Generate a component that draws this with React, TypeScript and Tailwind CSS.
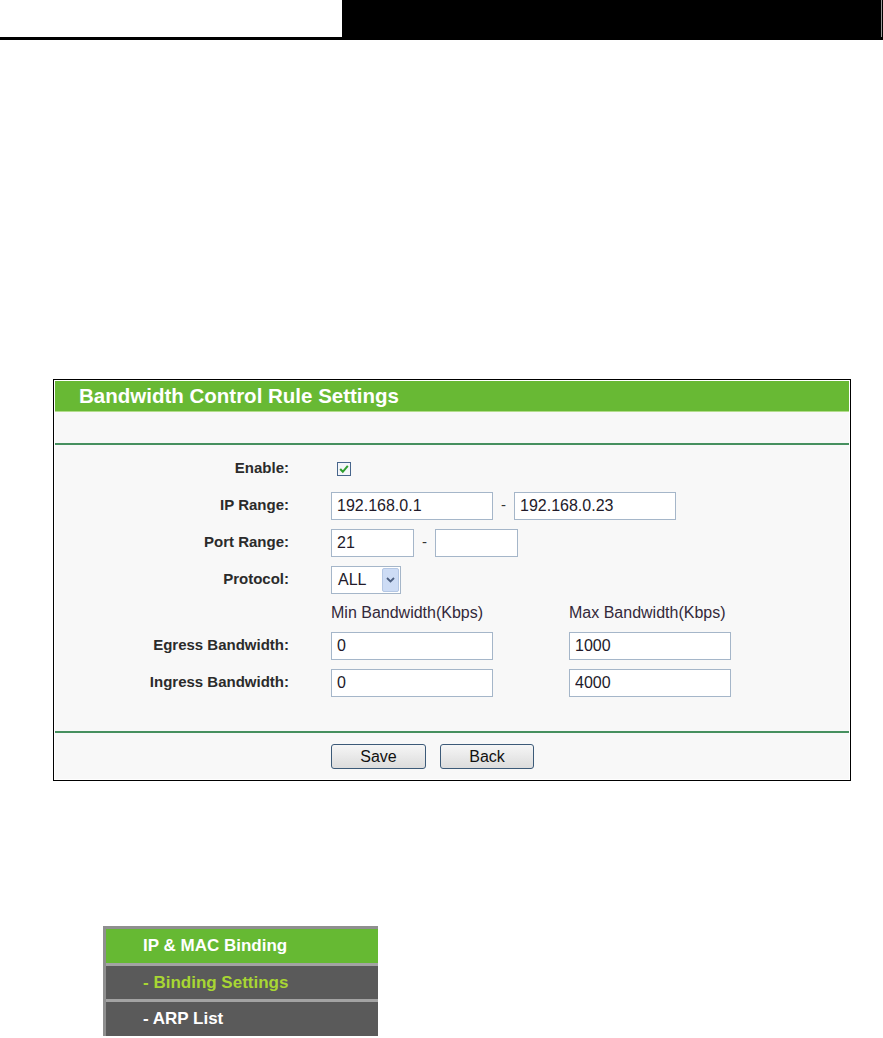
import React from "react";

const inputCls =
  "h-[28px] border border-[#a5b6c9] bg-white px-[5px] text-[16px] text-[#221a2a] outline-none";

function Row({
  label,
  children,
  height = "h-[37px]",
}: {
  label?: string;
  children: React.ReactNode;
  height?: string;
}) {
  return (
    <div className={`flex items-center ${height}`}>
      <div className="w-[234px] text-right text-[15px] font-bold text-[#2b2b2b]">
        {label}
      </div>
      <div className="ml-[42px] flex items-center">{children}</div>
    </div>
  );
}

function Dash() {
  return <span className="w-[21px] text-center text-[15px] text-[#333]">-</span>;
}

function CheckBox() {
  return (
    <svg width="14" height="14" viewBox="0 0 14 14" className="ml-[6px]">
      <rect x="0.5" y="0.5" width="13" height="13" fill="#f4f6f9" stroke="#48668c" />
      <path d="M3.2 7 L5.8 9.8 L10.8 3.8" fill="none" stroke="#2f9e2f" strokeWidth="2" />
    </svg>
  );
}

function Select() {
  return (
    <div className="flex h-[28px] w-[70px] items-center justify-between border border-[#a5b6c9] bg-white pl-[6px] pr-[1px]">
      <span className="text-[16px] text-[#221a2a]">ALL</span>
      <div className="flex h-[24px] w-[17px] items-center justify-center rounded-[2px] border border-[#b4c7e4] bg-[#cddcf5]">
        <svg width="9" height="6" viewBox="0 0 9 6">
          <path d="M1 1 L4.5 4.5 L8 1" fill="none" stroke="#4c5f80" strokeWidth="1.8" />
        </svg>
      </div>
    </div>
  );
}

function Button({ children, width }: { children: React.ReactNode; width: string }) {
  return (
    <button
      className={`h-[25px] ${width} rounded-[3px] border border-[#3c5a78] bg-gradient-to-b from-[#f6f6f6] to-[#dcdcdc] text-[16px] text-[#111]`}
    >
      {children}
    </button>
  );
}

export default function App() {
  return (
    <div className="min-h-screen bg-white font-['Liberation_Sans',Arial,sans-serif]">
      {/* top bar */}
      <div className="flex h-[37px]">
        <div className="w-[342px] bg-white" />
        <div className="flex flex-1 justify-end bg-black pr-[1px]">
          <div className="w-px bg-[#9a9a9a]" />
        </div>
      </div>
      <div className="h-[3px] bg-black" />

      {/* settings panel */}
      <div className="ml-[53px] mt-[339px] w-[798px] border border-black bg-white p-px">
        <div className="flex h-[30px] items-center bg-[#68b934] pl-[24px] text-[20.5px] font-bold text-white">
          Bandwidth Control Rule Settings
        </div>
        <div className="h-px bg-[#b2dc8c]" />
        <div className="h-[31px] bg-[#f8f8f8]" />
        <div className="h-[2px] bg-[#46905f]" />

        <div className="bg-[#f8f8f8] pb-[30px] pt-[5px]">
          <Row label="Enable:">
            <CheckBox />
          </Row>
          <Row label="IP Range:">
            <input readOnly defaultValue="192.168.0.1" className={`${inputCls} w-[162px]`} />
            <Dash />
            <input readOnly defaultValue="192.168.0.23" className={`${inputCls} w-[162px]`} />
          </Row>
          <Row label="Port Range:">
            <input readOnly defaultValue="21" className={`${inputCls} w-[83px]`} />
            <Dash />
            <input readOnly defaultValue="" className={`${inputCls} w-[83px]`} />
          </Row>
          <Row label="Protocol:">
            <Select />
          </Row>
          <Row height="h-[29px]">
            <div className="flex h-full items-start pt-px text-[16px] text-[#33293a]">
              <span className="w-[238px]">Min Bandwidth(Kbps)</span>
              <span>Max Bandwidth(Kbps)</span>
            </div>
          </Row>
          <Row label="Egress Bandwidth:">
            <input readOnly defaultValue="0" className={`${inputCls} w-[162px]`} />
            <span className="w-[76px]" />
            <input readOnly defaultValue="1000" className={`${inputCls} w-[162px]`} />
          </Row>
          <Row label="Ingress Bandwidth:">
            <input readOnly defaultValue="0" className={`${inputCls} w-[162px]`} />
            <span className="w-[76px]" />
            <input readOnly defaultValue="4000" className={`${inputCls} w-[162px]`} />
          </Row>
        </div>
        <div className="h-[2px] bg-[#46905f]" />
        <div className="flex gap-[14px] bg-[#f8f8f8] pb-[10px] pl-[276px] pt-[11px]">
          <Button width="w-[95px]">Save</Button>
          <Button width="w-[94px]">Back</Button>
        </div>
      </div>

      {/* menu */}
      <div className="ml-[103px] mt-[145px] w-[275px] border-l-[3px] border-t-[3px] border-[#8f8f8f]">
        <div className="flex h-[34px] items-center bg-[#66b933] pl-[37px] text-[17px] font-bold text-white">
          IP &amp; MAC Binding
        </div>
        <div className="h-[3px] bg-[#a3a3a3]" />
        <div className="flex h-[33px] items-center bg-[#5a5a5a] pl-[37px] text-[17px] font-bold text-[#a8d633]">
          - Binding Settings
        </div>
        <div className="h-[3px] bg-[#a3a3a3]" />
        <div className="flex h-[34px] items-center bg-[#5a5a5a] pl-[37px] text-[17px] font-bold text-white">
          - ARP List
        </div>
      </div>
    </div>
  );
}
